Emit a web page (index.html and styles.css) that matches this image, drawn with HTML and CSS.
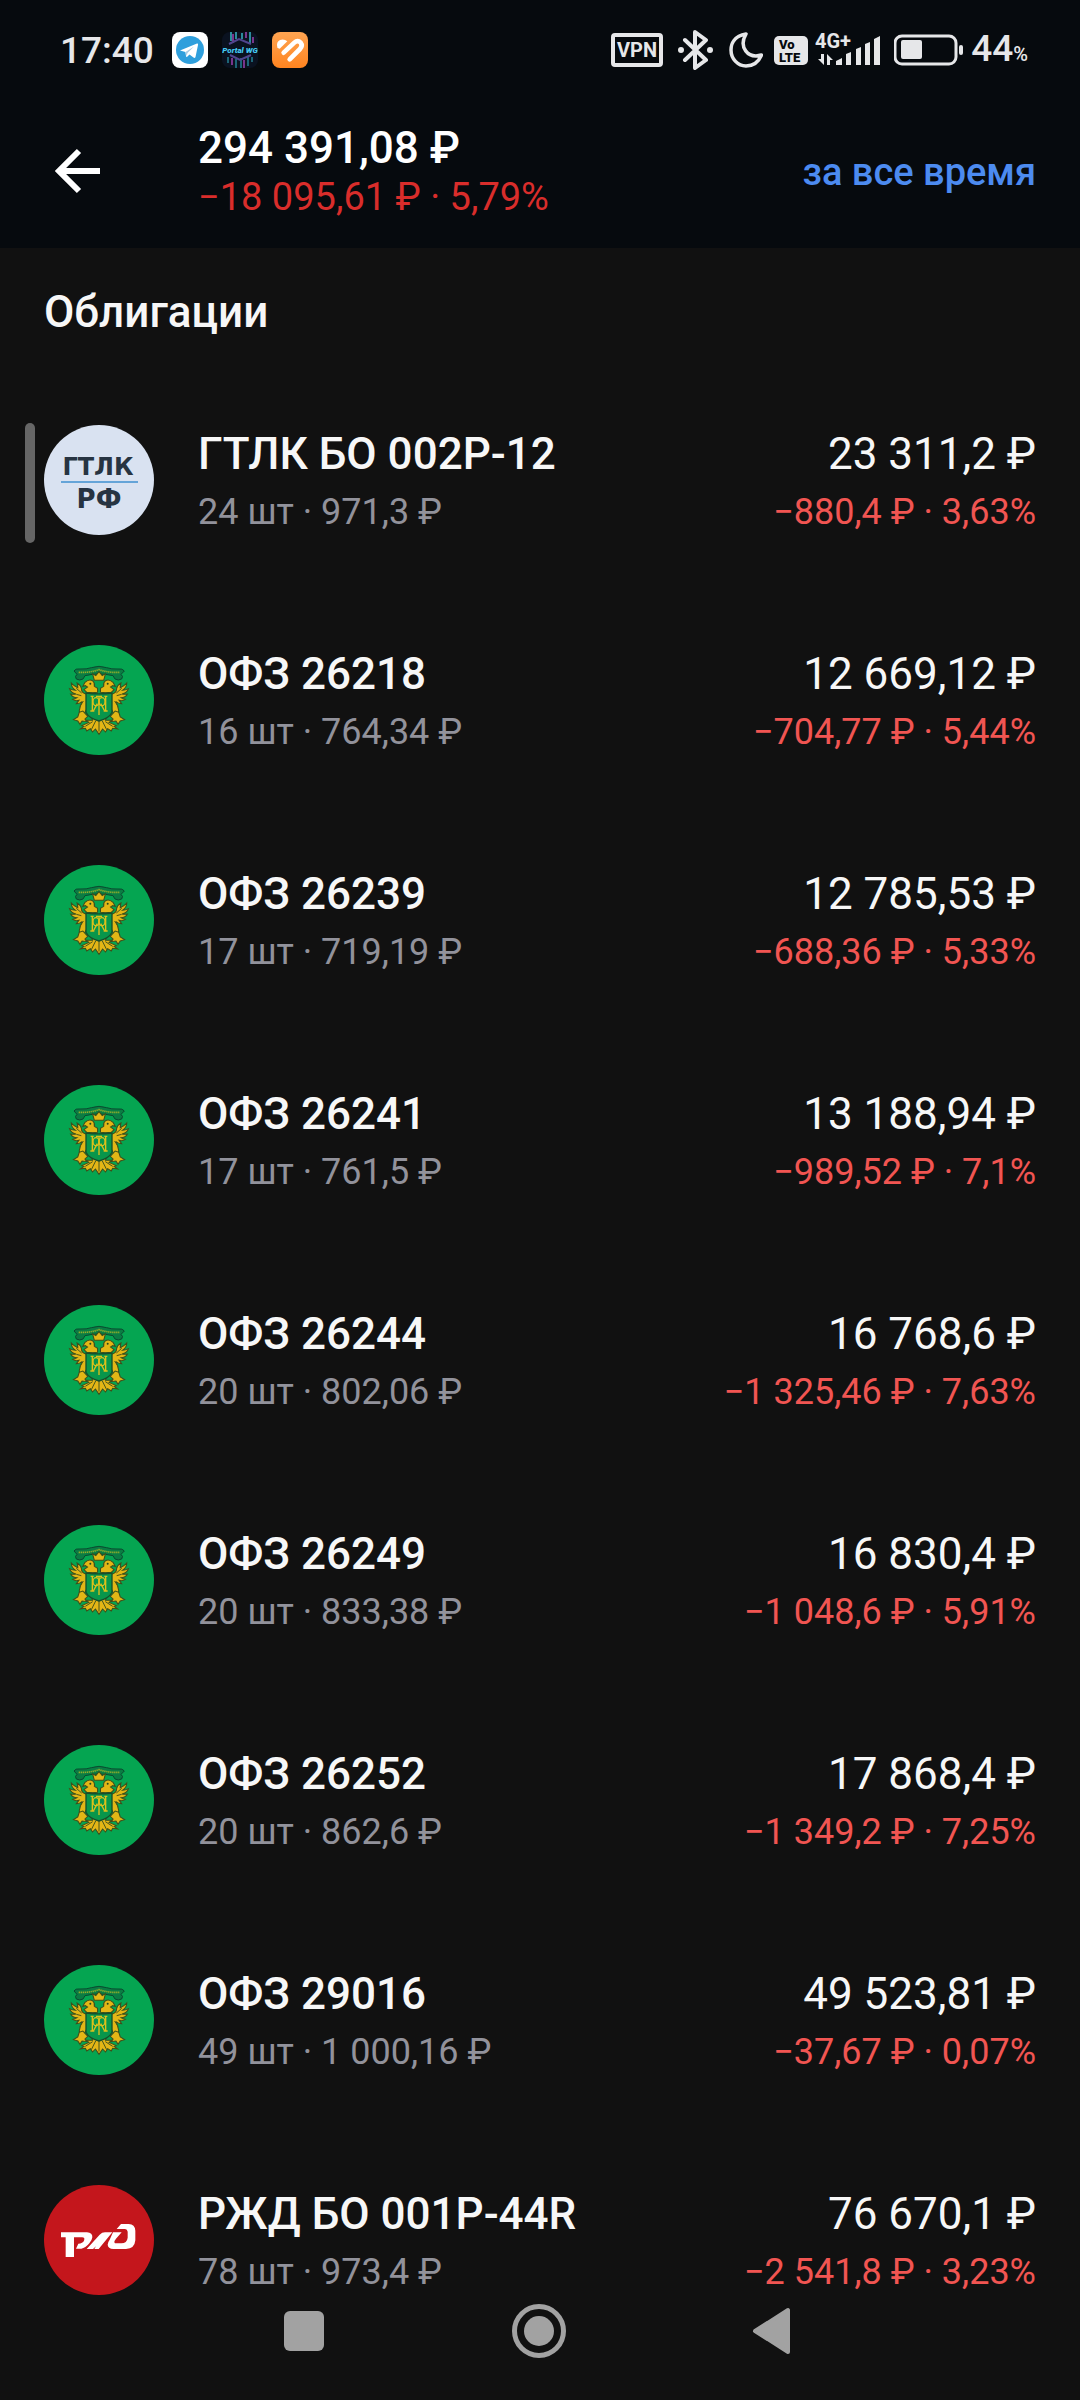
FILE: index.html
```html
<!DOCTYPE html>
<html lang="ru">
<head>
<meta charset="utf-8">
<meta name="viewport" content="width=device-width, initial-scale=1">
<title>Облигации</title>
<link rel="stylesheet" href="styles.css">
</head>
<body>
<svg class="sprite" aria-hidden="true">
  <symbol id="ofz" viewBox="42 48 330 330">
    <circle cx="207" cy="213" r="165" fill="#05a551"/>
    <!-- ribbon -->
    <path d="M132 126q4-8 18-6 20 1 34-4 23-8 46 0 14 5 34 4 14-2 19 6l-10 10q8 6 2 14-10 6-20 0l-6-10q-42-10-84 0l-6 10q-10 6-20 0-6-8 2-14z" fill="#0a7d43" stroke="#0a4a30" stroke-width="3"/>
    <path d="M146 130q30 2 61-8 31 10 61 8" fill="none" stroke="#8fae2c" stroke-width="5" stroke-dasharray="4 2"/>
    <!-- wings, heads, crown, legs and tail -->
    <g fill="#e3b616" stroke="#3f4f1b" stroke-width="3" transform="matrix(1.080 0 0 1 -16.500 0)">
      <path id="wing" d="M172 196q-14-4-14-18-2-10-12-16 2 8 2 14-10-4-18-14 0 14 12 22-8 0-17-5 4 13 18 16-7 2-15 0 5 11 18 11-5 4-12 5 8 6 17 3l-7 10q10 0 16-6-6 14-8 28 4 8 10 12 6-6 10-16l8-10z"/>
      <use href="#wing" transform="matrix(-1 0 0 1 414 0)"/>
      <path id="head" d="M203 190q-14 2-30 0l-8-8 10-8-6-4-7 2 6-12q12-12 22-4 6 6 4 16l9 6z"/>
      <use href="#head" transform="matrix(-1 0 0 1 414 0)"/>
      <path d="M194 154l-5-20 9 6 9-12 9 12 9-6-5 20z"/>
      <path id="leg" d="M162 246l14 16-8 8 6 8-14-2-6 10-6-10-12-4 12-8 4-14z"/>
      <use href="#leg" transform="matrix(-1 0 0 1 414 0)"/>
      <path d="M207 264l8 8 12-6-2 8 18 0-8 6 20 10-6 2 10 8-14-2-4 8-10-7-6 10-8-9-10 16-10-16-8 9-6-10-10 7-4-8-14 2 10-8-6-2 20-10-8-6 18 0-2-8 12 6z"/>
    </g>
    <path d="M207 272v36M197 276l-13 26M217 276l13 26M188 278l-22 14M226 278l22 14" stroke="#47551b" stroke-width="3" fill="none"/>
    <path d="M139 178l16 14M139 196l15 4M275 178l-16 14M275 196l-15 4M150 232l10-16M264 232l-10-16" stroke="#47551b" stroke-width="3"/>
    <circle cx="181" cy="164" r="3" fill="#21471f"/><circle cx="233" cy="164" r="3" fill="#21471f"/>
    <!-- shield with monogram -->
    <path d="M168 192q38 5 78 0v58q-8 18-39 26-31-8-39-26z" fill="#08964b" stroke="#174f2b" stroke-width="4"/>
    <g fill="none" stroke="#ddc01b" stroke-width="4">
      <path d="M182 202h9M187 202v42M181 246h12M223 202h9M227 202v42M221 246h12M198 202h18M207 202v56M190 246l12-22M224 246l-12-22"/>
      <ellipse cx="198" cy="218" rx="9" ry="12"/>
      <ellipse cx="216" cy="218" rx="9" ry="12"/>
    </g>
  </symbol>
</svg>

<header class="top">
  <div class="status">
    <span class="clock">17:40</span>
    <div class="apps">
      <svg width="36" height="36" viewBox="0 0 36 36" role="img" aria-label="Telegram"><rect width="36" height="36" rx="8" fill="#fff"/><circle cx="18" cy="18" r="14" fill="#2f9fdc"/><path d="M8 18.500L25 11.500q1.500-.4 1 1.500l-2.500 12q-.6 1.400-2 .6l-4-3-2.300 2.200q-1 .6-1.200-.8l-.6-4-4.400-1.200z" fill="#fff"/><path d="M13.500 20L22 14.500l-6.500 6.500-.8 3z" fill="#a9cbe3"/></svg>
      <svg width="36" height="36" viewBox="0 0 36 36" role="img" aria-label="Portal WG">
        <rect width="36" height="36" rx="8" fill="#0a1220"/>
        <path d="M9 0v9M14 0v7M20 1v6M28 0v11" stroke="#2b8b9c" stroke-width="2"/>
        <path d="M11 2v9M24 0v6M31 5v6M10 26v7M22 28v8" stroke="#78358c" stroke-width="2"/>
        <path d="M6 25v6M14 27v9M19 26v10M26 24v10M30 25v5" stroke="#1c6577" stroke-width="2"/>
        <path d="M7 12l10-5 12 5M8 23l10 5 11-5" stroke="#50458f" stroke-width="2" fill="none"/>
        <text x="18" y="21" text-anchor="middle" class="portal">Portal WG</text>
      </svg>
      <svg width="36" height="36" viewBox="816 96 108 108" aria-hidden="true"><defs><linearGradient id="or" x2="0" y2="1"><stop stop-color="#ffa552"/><stop offset="1" stop-color="#ff8420"/></linearGradient></defs><rect x="816" y="96" width="108" height="108" rx="24" fill="url(#or)"/><path d="M832 142q-4-16 8-22 12-5 22 4l-23 22q-5 0-7-4z" fill="#fff"/><path d="M851 158l32-30q10-9 19 0 7 9-2 19l-31 31" fill="none" stroke="#fff" stroke-width="14" stroke-linecap="round" stroke-linejoin="round"/></svg>
    </div>
    <div class="signals">
      <svg width="52" height="40" viewBox="611 30 52 40" role="img" aria-label="VPN"><rect x="613" y="35" width="48" height="30" rx="2" fill="none" stroke="#e6e7e9" stroke-width="4"/><text x="637" y="57" text-anchor="middle" class="vpn">VPN</text></svg>
      <svg class="bt" width="36" height="40" viewBox="678 30 36 40" role="img" aria-label="Bluetooth"><path d="M685 40l21 20-11 8V32l11 8-21 20" fill="none" stroke="#e6e7e9" stroke-width="4" stroke-linejoin="round" stroke-linecap="round"/><circle cx="681" cy="50" r="3" fill="#e6e7e9"/><circle cx="710" cy="50" r="3" fill="#e6e7e9"/></svg>
      <svg class="moon" width="34" height="40" viewBox="729 30 34 40" aria-hidden="true"><path d="M746 34C734 36 731 44 731 50c0 9 7 16 15 16 8 0 13-5 15.500-11-14 4-23-8-15.500-21z" fill="none" stroke="#e6e7e9" stroke-width="3.500" stroke-linejoin="round"/></svg>
      <svg class="volte" width="34" height="40" viewBox="774 30 34 40" role="img" aria-label="VoLTE"><rect x="774" y="36" width="34" height="29" rx="5" fill="#e6e7e9"/><text x="779" y="49" class="lte">Vo</text><text x="779" y="62" class="lte">LTE</text></svg>
      <svg width="66" height="40" viewBox="815 30 66 40" role="img" aria-label="4G+"><text x="815" y="48" class="net">4G+</text><g fill="#e6e7e9"><path d="M836 65v-4l6-3v7zM846 65V54l5-2v13zM856 65V49l5-2v18zM865 65V44l5-2v23zM874 65V39l6-3v29z"/><path d="M821 54h3v11l-6-6h3zM827 65V54l6 6h-3v5z"/></g></svg>
      <svg class="battery" width="70" height="40" viewBox="894 30 70 40" aria-hidden="true"><rect x="895" y="36" width="61" height="28" rx="7" fill="none" stroke="#e6e7e9" stroke-width="3"/><rect x="901" y="40" width="21" height="19" rx="2" fill="#e6e7e9"/><rect x="959" y="45" width="4" height="10" rx="2" fill="#e6e7e9"/></svg>
      <span class="charge">44<small>%</small></span>
    </div>
  </div>

  <div class="bar">
    <button class="back" type="button" aria-label="Назад"><svg width="110" height="50" viewBox="43 147 110 50"><path d="M99 171H59M78 151L58 171l20 20" fill="none" stroke="#fff" stroke-width="6"/></svg></button>
    <div class="total">
      <div class="total-sum">294 391,08 ₽</div>
      <div class="total-change">−18 095,61 ₽ · 5,79%</div>
    </div>
    <button class="period" type="button">за все время</button>
  </div>
</header>

<main>
  <h1 class="heading">Облигации</h1>
  <ul class="list">
    <li class="row marked">
      <svg class="logo" viewBox="0 0 110 110" role="img" aria-label="ГТЛК РФ"><circle cx="55" cy="55" r="55" fill="#d9e2f1"/><text x="54" y="50" text-anchor="middle" class="gtlk">ГТЛК</text><path d="M17 57h77" stroke="#65a4d8" stroke-width="2"/><text x="55" y="83" text-anchor="middle" class="gtlk rf">РФ</text></svg>
      <div class="info"><div class="name">ГТЛК БО 002P-12</div><div class="detail">24 шт · 971,3 ₽</div></div>
      <div class="value"><div class="sum">23 311,2 ₽</div><div class="loss">−880,4 ₽ · 3,63%</div></div>
    </li>
    <li class="row">
      <svg class="logo" aria-hidden="true"><use href="#ofz"/></svg>
      <div class="info"><div class="name">ОФЗ 26218</div><div class="detail">16 шт · 764,34 ₽</div></div>
      <div class="value"><div class="sum">12 669,12 ₽</div><div class="loss">−704,77 ₽ · 5,44%</div></div>
    </li>
    <li class="row">
      <svg class="logo" aria-hidden="true"><use href="#ofz"/></svg>
      <div class="info"><div class="name">ОФЗ 26239</div><div class="detail">17 шт · 719,19 ₽</div></div>
      <div class="value"><div class="sum">12 785,53 ₽</div><div class="loss">−688,36 ₽ · 5,33%</div></div>
    </li>
    <li class="row">
      <svg class="logo" aria-hidden="true"><use href="#ofz"/></svg>
      <div class="info"><div class="name">ОФЗ 26241</div><div class="detail">17 шт · 761,5 ₽</div></div>
      <div class="value"><div class="sum">13 188,94 ₽</div><div class="loss">−989,52 ₽ · 7,1%</div></div>
    </li>
    <li class="row">
      <svg class="logo" aria-hidden="true"><use href="#ofz"/></svg>
      <div class="info"><div class="name">ОФЗ 26244</div><div class="detail">20 шт · 802,06 ₽</div></div>
      <div class="value"><div class="sum">16 768,6 ₽</div><div class="loss">−1 325,46 ₽ · 7,63%</div></div>
    </li>
    <li class="row">
      <svg class="logo" aria-hidden="true"><use href="#ofz"/></svg>
      <div class="info"><div class="name">ОФЗ 26249</div><div class="detail">20 шт · 833,38 ₽</div></div>
      <div class="value"><div class="sum">16 830,4 ₽</div><div class="loss">−1 048,6 ₽ · 5,91%</div></div>
    </li>
    <li class="row">
      <svg class="logo" aria-hidden="true"><use href="#ofz"/></svg>
      <div class="info"><div class="name">ОФЗ 26252</div><div class="detail">20 шт · 862,6 ₽</div></div>
      <div class="value"><div class="sum">17 868,4 ₽</div><div class="loss">−1 349,2 ₽ · 7,25%</div></div>
    </li>
    <li class="row">
      <svg class="logo" aria-hidden="true"><use href="#ofz"/></svg>
      <div class="info"><div class="name">ОФЗ 29016</div><div class="detail">49 шт · 1 000,16 ₽</div></div>
      <div class="value"><div class="sum">49 523,81 ₽</div><div class="loss">−37,67 ₽ · 0,07%</div></div>
    </li>
    <li class="row">
      <svg class="logo" viewBox="42 48 330 330" aria-hidden="true"><circle cx="207" cy="213" r="165" fill="#c4161c"/><g fill="#fff"><path d="M93 190h78q17 1 16 15-1 9-9 18-12 15-24 16h-16l7-15q13-1 17-9 4-10-6-10h-24v59h-25v-59h-14z"/><path d="M170 240l39-43q7-7 16-7h22l-41 50h-13l5-8-9 8z"/><path d="M249 190h26l-17 19q-11 14 2 14h14q17 0 19-17v-18q-1-8-8-8h-25l13-15h23q19 1 20 20v29q-2 25-28 26h-38q-16-1-17-13 0-7 6-15z"/></g></svg>
      <div class="info"><div class="name">РЖД БО 001P-44R</div><div class="detail">78 шт · 973,4 ₽</div></div>
      <div class="value"><div class="sum">76 670,1 ₽</div><div class="loss">−2 541,8 ₽ · 3,23%</div></div>
    </li>
  </ul>
</main>

<nav class="system" aria-label="Системная навигация">
  <button type="button" aria-label="Недавние"><svg width="54" height="54" viewBox="0 0 54 54"><rect x="7" y="7" width="40" height="40" rx="6" fill="#a2a2a2"/></svg></button>
  <button type="button" aria-label="Домой"><svg width="54" height="54" viewBox="0 0 54 54"><circle cx="27" cy="27" r="24.500" fill="none" stroke="#a2a2a2" stroke-width="5"/><circle cx="27" cy="27" r="15" fill="#a2a2a2"/></svg></button>
  <button type="button" aria-label="Назад"><svg width="54" height="54" viewBox="0 0 54 54"><path d="M8 27L41 6v42z" fill="#a2a2a2" stroke="#a2a2a2" stroke-width="4" stroke-linejoin="round"/></svg></button>
</nav>
</body>
</html>
```

FILE: styles.css
```css
* {
  box-sizing: border-box;
}

body {
  margin: 0;
  min-height: 100vh;
  background: #111;
  color: #f7f7f7;
  font-family: Roboto, "Noto Sans", sans-serif;
  white-space: nowrap;
}

button {
  margin: 0;
  padding: 0;
  border: 0;
  background: none;
  color: inherit;
  font: inherit;
}

svg {
  display: block;
  flex: none;
}

.sprite {
  position: absolute;
  width: 0;
  height: 0;
}

.top {
  background: #060a0e;
}

/* status bar */
.status {
  display: flex;
  align-items: center;
  height: 100px;
  padding: 0 52px 0 60px;
  color: #e6e7e9;
}

.clock,
.charge {
  padding-top: 2px;
  font-size: 37px;
  font-weight: 500;
  line-height: 44px;
}

.clock {
  width: 112px;
}

.apps {
  display: flex;
  gap: 14px;
}

.signals {
  display: flex;
  align-items: center;
  margin-left: auto;
}

.bt,
.moon {
  margin-left: 15px;
}

.volte {
  margin: 0 7px 0 11px;
}

.battery {
  margin: 0 7px 0 13px;
}

.charge small {
  font-size: 20px;
}

.vpn {
  fill: #e6e7e9;
  font-size: 20px;
  font-weight: 700;
}

.lte {
  fill: #060a0e;
  font-size: 13px;
  font-weight: 900;
}

.net {
  fill: #e6e7e9;
  font-size: 20px;
  font-weight: 700;
}

.portal {
  fill: #45c9f2;
  font-size: 8px;
  font-style: italic;
  font-weight: 900;
}

/* header */
.bar {
  display: flex;
  align-items: center;
  padding: 23px 44px 27px;
}

.back {
  margin-right: 44px;
}

.total {
  flex: 1;
}

.total-sum {
  color: #fff;
  font-size: 44px;
  font-weight: 500;
  line-height: 50px;
}

.total-change {
  color: #d92d2b;
  font-size: 38px;
  line-height: 48px;
}

.period {
  color: #4c8bf0;
  font-size: 38px;
  font-weight: 500;
  line-height: 48px;
}

/* holdings */
.heading {
  margin: 0;
  padding: 34px 44px 28px;
  font-size: 44px;
  font-weight: 500;
  line-height: 60px;
}

.list {
  margin: 0;
  padding: 0;
  list-style: none;
}

.row {
  position: relative;
  display: flex;
  align-items: center;
  gap: 44px;
  padding: 52px 44px;
}

.marked::before {
  content: "";
  position: absolute;
  top: 53px;
  left: 25px;
  width: 10px;
  height: 120px;
  border-radius: 5px;
  background: #666;
}

.logo {
  width: 110px;
  height: 110px;
}

.gtlk {
  fill: #273442;
  font-family: "DejaVu Sans", sans-serif;
  font-size: 24px;
  font-weight: 700;
}

.rf {
  font-size: 26px;
}

.info {
  flex: 1;
}

.value {
  text-align: right;
}

.name,
.sum {
  font-size: 44px;
  line-height: 64px;
}

.name {
  font-weight: 500;
}

.detail,
.loss {
  font-size: 36px;
  line-height: 52px;
}

.detail {
  color: #92929b;
}

.loss {
  color: #f15552;
}

/* navigation keys lie over the end of the list */
.system {
  position: fixed;
  right: 0;
  bottom: 0;
  left: 0;
  display: flex;
  padding: 0 188px 0 186px;
}

.system button {
  display: flex;
  flex: 1;
  align-items: center;
  justify-content: center;
  height: 138px;
}
```
